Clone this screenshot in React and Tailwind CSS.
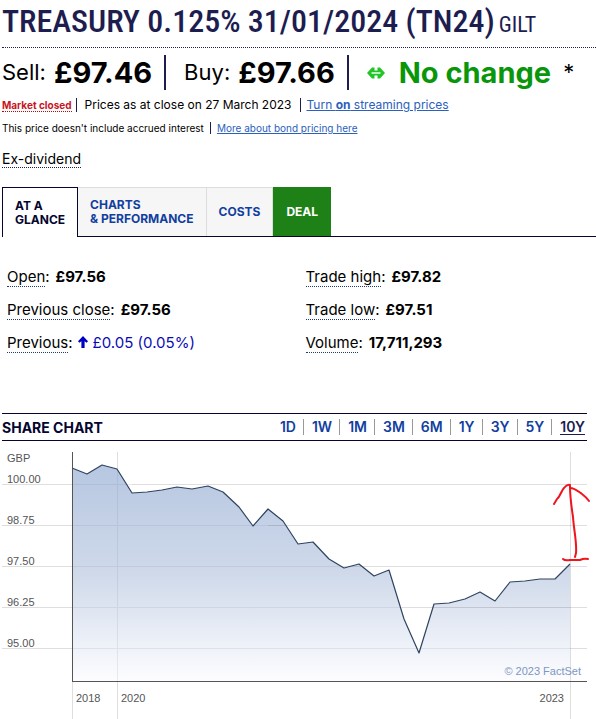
import { useState } from "react";

const tabs = [
  { id: "glance", lines: ["AT A", "GLANCE"] },
  { id: "charts", lines: ["CHARTS", "& PERFORMANCE"] },
  { id: "costs", lines: ["COSTS"] },
];

const stats = [
  { label: "Open", value: "£97.56" },
  { label: "Trade high", value: "£97.82" },
  { label: "Previous close", value: "£97.56" },
  { label: "Trade low", value: "£97.51" },
  { label: "Previous", change: "£0.05 (0.05%)" },
  { label: "Volume", value: "17,711,293" },
];

const ranges = ["1D", "1W", "1M", "3M", "6M", "1Y", "3Y", "5Y", "10Y"];

const gridLines = [
  { y: 43, label: "100.00" },
  { y: 84, label: "98.75" },
  { y: 125, label: "97.50" },
  { y: 166, label: "96.25" },
  { y: 207, label: "95.00" },
];

const points = [
  [70, 27], [85, 33], [100, 24], [115, 28], [130, 52], [145, 51], [160, 49],
  [175, 46], [190, 48], [206, 45], [221, 51], [237, 66], [251, 85], [266, 68],
  [281, 80], [296, 103], [311, 101], [327, 118], [342, 127], [357, 123],
  [372, 135], [387, 129], [402, 178], [417, 212], [432, 163], [447, 162],
  [463, 158], [478, 151], [493, 160], [508, 141], [523, 140], [538, 138],
  [553, 138], [568, 123],
];

const linePath = "M" + points.map((p) => p.join(" ")).join(" L");

function Stat({ label, value, change }) {
  return (
    <div className="flex h-[33px] items-center text-[15px]">
      <dt>
        <span className="inline-block border-b border-dotted border-[#1d3a7a] leading-[18px]">{label}</span>:
      </dt>
      {change ? (
        <dd className="flex items-center text-[#0b0bb5]">
          <svg viewBox="0 0 10 12" className="mx-[5px] h-3 w-[10px]" aria-hidden="true">
            <path d="M5 0 L10 5.2 L8.6 6.7 L6.6 5.2 V12 H3.4 V5.2 L1.4 6.7 L0 5.2 Z" fill="#0000c0" />
          </svg>
          {change}
        </dd>
      ) : (
        <dd className="ml-[6px] font-bold">{value}</dd>
      )}
    </div>
  );
}

function ShareChart() {
  return (
    <svg viewBox="0 0 585 278" className="block w-full overflow-visible" role="img" aria-label="Share chart">
      <defs>
        <linearGradient id="area" x1="0" y1="24" x2="0" y2="240" gradientUnits="userSpaceOnUse">
          <stop offset="0" stopColor="#b7c7e1" />
          <stop offset="0.5" stopColor="#cfd9ea" />
          <stop offset="1" stopColor="#fdfdff" />
        </linearGradient>
      </defs>

      <path d={`${linePath} V240 H70 Z`} fill="url(#area)" />

      {/* grid */}
      <g stroke="#000" strokeOpacity="0.13" shapeRendering="crispEdges">
        {gridLines.map((g) => (
          <path key={g.y} d={`M0 ${g.y}.5 H70`} />
        ))}
        <path d="M130 43.5 H585 M266 84.5 H585 M342 125.5 H585 M400 166.5 H585 M568 207.5 H585" />
        <path d="M70.5 240 V278 M115.5 11 V28 M115.5 240 V278 M568.5 11 V278" />
      </g>
      <g stroke="#5b7398" strokeOpacity="0.13" shapeRendering="crispEdges">
        <path d="M70 43.5 H130 M70 84.5 H266 M70 125.5 H342 M70 166.5 H400 M70 207.5 H568 M115.5 28 V240" />
      </g>

      <path d={linePath} fill="none" stroke="#2f4360" strokeWidth="1.2" strokeLinejoin="round" />
      <path d="M70.5 11 V240.5 H585" fill="none" stroke="#555" shapeRendering="crispEdges" />

      <g fill="#555" fontSize="11" fontFamily="'Liberation Sans', Arial, sans-serif">
        <text x="5" y="21">GBP</text>
        {gridLines.map((g) => (
          <text key={g.label} x="5" y={g.y - 1}>{g.label}</text>
        ))}
        <text x="74" y="261">2018</text>
        <text x="119" y="261">2020</text>
        <text x="562" y="261" textAnchor="end">2023</text>
        <text x="579" y="234" textAnchor="end" fill="#7b98c4">© 2023 FactSet</text>
      </g>

      {/* hand drawn arrow */}
      <g fill="none" stroke="#f0141c" strokeWidth="2" strokeLinecap="round" strokeLinejoin="round">
        <path d="M552 63 L555 58 C558 56 559 50 562 47 Q565 43 568 44" />
        <path d="M568 47 C573 47 577 51 580 53 Q584 56 587 60" />
        <path d="M568 45 C568 55 569 63 571 76 C572 90 575 102 574 112 L573 116" />
        <path d="M561 118 Q563 120 568 119 L578 119 Q582 117 586 118" />
      </g>
    </svg>
  );
}

export default function App() {
  const [tab, setTab] = useState("glance");
  const [range, setRange] = useState("10Y");

  return (
    <main className="w-full overflow-x-hidden bg-white pl-[2px] font-['Inter',sans-serif] text-sm text-black">
      <h1 className="flex h-12 items-baseline whitespace-nowrap border-b border-dotted border-[#1d1d50] font-['Roboto_Condensed','Liberation_Sans_Narrow',sans-serif] text-[32px] leading-[42px] font-medium text-[#1d1d50]">
        TREASURY 0.125% 31/01/2024 (TN24)
        <small className="ml-1 text-[22px] font-normal">GILT</small>
      </h1>

      {/* Prices */}
      <div className="flex h-[49px] items-center whitespace-nowrap text-[22px]">
        <span>Sell:</span>
        <strong className="ml-2 text-[29px]">£97.46</strong>
        <span className="mx-3 h-[35px] w-[2px] bg-[#1d1d50]" />
        <span className="ml-[6px]">Buy:</span>
        <strong className="ml-2 text-[29px]">£97.66</strong>
        <span className="mx-3 h-[35px] w-[2px] bg-[#1d1d50]" />
        <svg viewBox="0 0 18 12" className="ml-[6px] h-3 w-[18px] shrink-0" aria-hidden="true">
          <path d="M0 6 L5 0.5 H7.5 V3.5 H10.5 V0.5 H13 L18 6 L13 11.5 H10.5 V8.5 H7.5 V11.5 H5 Z" fill="#22c528" />
          <path d="M4.5 6 H13.5" stroke="#fff" strokeWidth="1.4" />
        </svg>
        <strong className="ml-[14px] text-[29px] text-[#0a960a]">No change</strong>
        <span className="ml-3">*</span>
      </div>

      <p className="flex h-4 items-center whitespace-nowrap text-xs">
        <span className="border-b border-dotted border-[#c00] text-[10px] leading-3 font-bold text-[#c8141e]">Market closed</span>
        <span className="mr-2 ml-1 h-[14px] w-px bg-[#1d1d50]" />
        Prices as at close on 27 March 2023
        <span className="ml-2 mr-[6px] h-[14px] w-px bg-[#1d1d50]" />
        <a href="#streaming" className="text-[#2b60bd] underline">Turn <b>on</b> streaming prices</a>
      </p>

      <p className="mt-[7px] flex h-4 items-center whitespace-nowrap text-[10px]">
        This price doesn't include accrued interest
        <span className="mx-[6px] h-3 w-px bg-[#1d1d50]" />
        <a href="#pricing" className="text-[#2b60bd] underline">More about bond pricing here</a>
      </p>

      <p className="mt-[13px] h-[38px]">
        <span className="inline-block border-b border-dotted border-[#1d1d50] leading-4">Ex-dividend</span>
      </p>

      {/* Tabs */}
      <div className="flex h-[50px] border-b border-[#05052f] text-xs leading-[14px] font-bold">
        {tabs.map((t) => (
          <button
            key={t.id}
            type="button"
            onClick={() => setTab(t.id)}
            className={
              tab === t.id
                ? "-mb-px border border-b-0 border-[#05052f] bg-white px-3 text-left text-[#05052f]"
                : "border-t border-r border-[#ddd] bg-[#f6f6f6] px-3 text-left text-[#123f9f]"
            }
          >
            {t.lines.map((line) => (
              <span key={line} className="block whitespace-nowrap">{line}</span>
            ))}
          </button>
        ))}
        <button type="button" className="bg-[#1d8118] px-[13px] text-white">DEAL</button>
      </div>

      <dl className="mt-[23px] grid grid-cols-2 gap-x-2 pl-[5px]">
        {stats.map((s) => (
          <Stat key={s.label} {...s} />
        ))}
      </dl>

      <section className="mt-[54px] pr-[9px]">
        <div className="flex h-7 items-center justify-between border-y border-[#05052f] text-sm leading-[15px]">
          <h2 className="font-bold text-[#05052f]">SHARE CHART</h2>
          <div className="flex items-center font-semibold">
            {ranges.map((r, i) => (
              <span key={r} className={i < ranges.length - 1 ? "mr-2 flex border-r border-[#999] pr-[7px]" : "mr-[2px] flex"}>
                <button
                  type="button"
                  onClick={() => setRange(r)}
                  className={range === r ? "border-b border-[#1d1d50] text-[#1d1d50]" : "border-b border-transparent text-[#123f9f]"}
                >
                  {r}
                </button>
              </span>
            ))}
          </div>
        </div>
        <ShareChart />
      </section>
    </main>
  );
}
